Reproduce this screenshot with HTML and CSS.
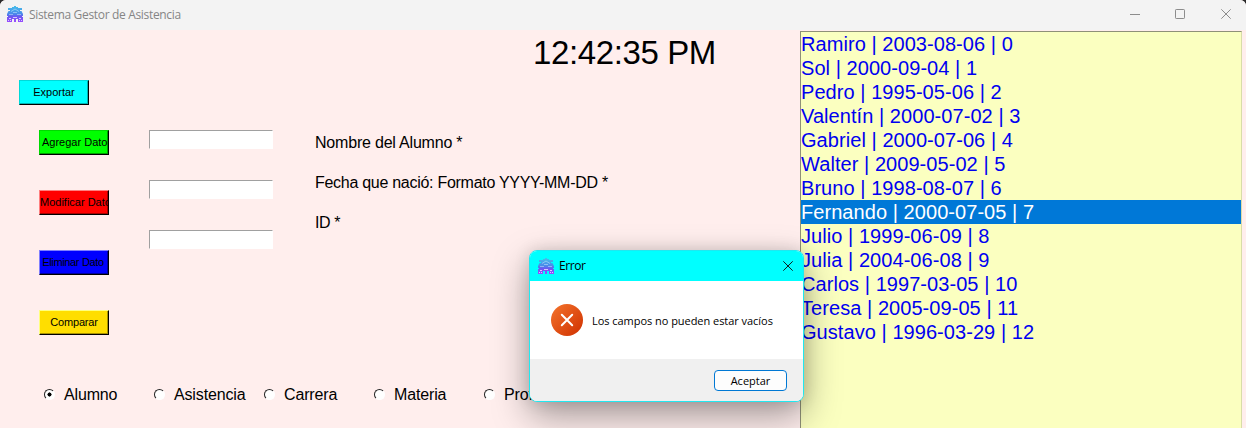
FILE: index.html
```html
<!DOCTYPE html>
<html lang="es">
<head>
<meta charset="utf-8">
<title>Sistema Gestor de Asistencia</title>
<link rel="stylesheet" href="styles.css">
</head>
<body>
<svg width="0" height="0" class="defs">
  <defs>
    <linearGradient id="roof" x1="0" y1="0" x2="0" y2="16" gradientUnits="userSpaceOnUse">
      <stop offset="0" stop-color="#45c0ea"/><stop offset=".5" stop-color="#4a88ea"/><stop offset=".65" stop-color="#6a5af0"/><stop offset="1" stop-color="#9a4cff"/>
    </linearGradient>
    <linearGradient id="alarm" x1="0" y1="0" x2="1" y2="1">
      <stop offset="0" stop-color="#f4742c"/><stop offset="1" stop-color="#cf3000"/>
    </linearGradient>
    <symbol id="school" viewBox="0 0 16 16">
      <path fill="url(#roof)" d="M7 0h2v1h2v1h4v2h-2v1h1.500L16 8v2h-1v1h1v5h-5v-3H9v3H7v-3H5v3H0v-5h1v-1H0V8l1.500-3H3V4H1V2h4V1h2z"/>
      <path fill="none" stroke="#d8f0ff" stroke-opacity=".6" stroke-width=".8" d="M4 5.500l4-2.500 4 2.500M6 6.500h4M2 8.500h4M10 8.500h4"/>
      <path fill="none" stroke="#efe4ff" stroke-opacity=".8" d="M2 12.500h2M12 12.500h2M6 11.500h4M1 14.500h1M3 14.500h1M12 14.500h1M14 14.500h1"/>
    </symbol>
  </defs>
</svg>
<div class="window">
  <header class="titlebar">
    <svg class="app-icon" width="16" height="16"><use href="#school"/></svg>
    <h1 class="window-title">Sistema Gestor de Asistencia</h1>
    <svg class="controls" width="102" height="10" viewBox="0 0 102 10" fill="none" stroke="#8c8c8c">
      <path d="M0 5.500h10"/><rect x="45.500" y=".5" width="9" height="9" rx=".7"/><path d="M91.300.3l9.400 9.400M100.700.3l-9.400 9.400"/>
    </svg>
  </header>
  <main class="content">
    <section class="panel">
      <div class="clock">12:42:35 PM</div>
      <button class="btn export">Exportar</button>
      <div class="form">
        <div class="actions">
          <button class="btn add">Agregar Dato</button>
          <button class="btn edit">Modificar Dato</button>
          <button class="btn remove">Eliminar Dato</button>
          <button class="btn compare">Comparar</button>
        </div>
        <div class="fields">
          <input class="field" type="text"><input class="field" type="text"><input class="field" type="text">
        </div>
        <div class="labels">
          <div><span class="l-name">Nombre del Alumno *</span></div>
          <div><span class="l-date">Fecha que nació: Formato YYYY-MM-DD *</span></div>
          <div><span class="l-id">ID *</span></div>
        </div>
      </div>
      <div class="radios">
        <label class="option"><i class="dot checked"></i>Alumno</label>
        <label class="option"><i class="dot"></i>Asistencia</label>
        <label class="option"><i class="dot"></i>Carrera</label>
        <label class="option"><i class="dot"></i>Materia</label>
        <label class="option"><i class="dot"></i>Profesor</label>
      </div>
    </section>
    <ul class="list">
      <li>Ramiro | 2003-08-06 | 0</li>
      <li>Sol | 2000-09-04 | 1</li>
      <li>Pedro | 1995-05-06 | 2</li>
      <li>Valentín | 2000-07-02 | 3</li>
      <li>Gabriel | 2000-07-06 | 4</li>
      <li>Walter | 2009-05-02 | 5</li>
      <li>Bruno | 1998-08-07 | 6</li>
      <li class="selected">Fernando | 2000-07-05 | 7</li>
      <li>Julio | 1999-06-09 | 8</li>
      <li>Julia | 2004-06-08 | 9</li>
      <li>Carlos | 1997-03-05 | 10</li>
      <li>Teresa | 2005-09-05 | 11</li>
      <li>Gustavo | 1996-03-29 | 12</li>
    </ul>
  </main>
</div>
<div class="dialog" role="alertdialog">
  <div class="dialog-title">
    <svg width="16" height="16"><use href="#school"/></svg>
    <span>Error</span>
    <svg class="close" width="10" height="10" fill="none" stroke="#102020"><path d="M.3.3l9.400 9.400M9.700.3L.3 9.700"/></svg>
  </div>
  <div class="dialog-body">
    <svg width="32" height="32" viewBox="0 0 32 32"><circle cx="16" cy="16" r="16" fill="url(#alarm)"/><path d="M10.800 10.800l10.400 10.400M21.200 10.800L10.800 21.200" stroke="#fff" stroke-width="2" stroke-linecap="round"/></svg>
    <span class="message">Los campos no pueden estar vacíos</span>
  </div>
  <div class="dialog-footer"><button class="accept">Aceptar</button></div>
</div>
</body>
</html>
```
FILE: styles.css
```css
* { box-sizing: border-box; }
body {
  margin: 0;
  background: #2b2b2b;
  color: #000;
  font-family: "Liberation Sans", Arial, sans-serif;
  overflow: hidden;
}
.defs { position: absolute; }
.window {
  height: 428px;
  display: flex;
  flex-direction: column;
  background: #ffeeed;
  border-radius: 6px 6px 0 0;
  overflow: hidden;
}
.titlebar {
  height: 30px;
  flex: none;
  display: flex;
  align-items: center;
  padding: 0 14px 2px 7px;
  background: #f3f3f3;
}
.window-title {
  margin: 0 auto 0 6px;
  padding-top: 1px;
  font: 12px "Open Sans", "Noto Sans", sans-serif;
  letter-spacing: -.33px;
  color: #858585;
  white-space: nowrap;
}
.content { flex: 1; display: flex; min-height: 0; }
.panel { width: 800px; display: flex; flex-direction: column; }
.clock {
  height: 45px;
  padding-left: 533px;
  font-size: 33px;
  line-height: 45px;
  letter-spacing: -.38px;
}
.btn {
  display: flex;
  align-items: center;
  justify-content: center;
  width: 70px;
  height: 25px;
  padding: 0 1px 2px;
  border: 1px solid;
  border-right-color: #000;
  border-bottom-color: #000;
  font: 11px "Liberation Sans", Arial, sans-serif;
  color: #000;
  white-space: nowrap;
  overflow: hidden;
}
.export { margin: 5px 0 0 19px; background: #00ffff; border-top-color: #00d9d9; border-left-color: #00d9d9; box-shadow: inset -1px -1px #00b4b4; }
.add { justify-content: flex-start; padding-left: 2px; background: #00ff00; border-top-color: #00d900; border-left-color: #00d900; box-shadow: inset -1px -1px #00a000; }
.edit { justify-content: flex-start; padding-left: 0; background: #ff0000; border-top-color: #ff8080; border-left-color: #ff8080; box-shadow: inset -1px -1px #a80000; }
.remove { letter-spacing: -.35px; padding-right: 3px; background: #0000ff; border-top-color: #8080ff; border-left-color: #8080ff; box-shadow: inset -1px -1px #0000a0; }
.compare { letter-spacing: -.2px; background: #ffde00; border-top-color: #ffff80; border-left-color: #ffff80; box-shadow: inset -1px -1px #a89200; }
.form { display: flex; padding: 25px 0 0 39px; }
.actions { width: 110px; display: flex; flex-direction: column; gap: 35px; }
.fields { width: 166px; display: flex; flex-direction: column; gap: 31px; }
.field {
  width: 124px;
  height: 19px;
  padding: 0 2px;
  border: 1px solid #fff;
  border-top-color: #a0a0a0;
  border-left-color: #a0a0a0;
  outline: 0;
  background: #fff;
}
.labels { padding-top: 3px; font-size: 16px; line-height: 20px; display: flex; flex-direction: column; gap: 20px; white-space: nowrap; }
.l-name { letter-spacing: -.2px; }
.l-date { letter-spacing: -.28px; }
.l-id { letter-spacing: -.4px; }
.radios {
  display: grid;
  grid-template-columns: repeat(5, 110px);
  padding: 50px 0 0 44px;
  font-size: 16px;
  line-height: 20px;
  letter-spacing: -.15px;
}
.option { display: flex; align-items: center; gap: 9px; }
.dot {
  width: 11px;
  height: 11px;
  margin-top: -2px;
  border-radius: 50%;
  background: #fff;
  border: 1.500px solid;
  border-color: #222 #fff #fff #222;
}
.checked { background: radial-gradient(circle, #000 1.8px, #fff 2.300px); }
.list {
  width: 442px;
  margin: 1px 0 0;
  padding: 0;
  border: 1px solid #8f9078;
  border-right-color: #d9dca8;
  border-bottom: 0;
  list-style: none;
  background: #fbffc0;
  color: #0000f0;
  font-size: 20px;
  line-height: 24px;
  letter-spacing: .06px;
  white-space: nowrap;
}
.selected { background: #0078d7; color: #fff; }
.dialog {
  position: absolute;
  left: 529px;
  top: 250px;
  width: 275px;
  height: 152px;
  display: flex;
  flex-direction: column;
  border: 1px solid #20e8f0;
  border-radius: 8px;
  background: #fff;
  overflow: hidden;
  box-shadow: 0 14px 36px rgba(0, 0, 0, .36), 0 0 16px rgba(0, 0, 0, .12);
  font: 12px "Open Sans", "Noto Sans", sans-serif;
}
.dialog-title {
  height: 30px;
  flex: none;
  display: flex;
  align-items: center;
  gap: 5px;
  padding: 0 10px 0 8px;
  background: #00ffff;
  letter-spacing: -.4px;
}
.dialog-title span { padding-bottom: 1px; }
.close { margin-left: auto; }
.dialog-body {
  height: 78px;
  flex: none;
  display: flex;
  align-items: center;
  gap: 9px;
  padding-left: 21px;
}
.message { font-size: 11px; letter-spacing: -.04px; white-space: nowrap; }
.dialog-footer {
  flex: 1;
  display: flex;
  justify-content: flex-end;
  align-items: center;
  padding-right: 16px;
  background: #f0f0f0;
}
.accept {
  width: 73px;
  height: 21px;
  padding: 0;
  border: 1px solid #0078d4;
  border-radius: 4px;
  background: #fdfdfd;
  font: 11px "Open Sans", "Noto Sans", sans-serif;
  color: #000;
}
```
